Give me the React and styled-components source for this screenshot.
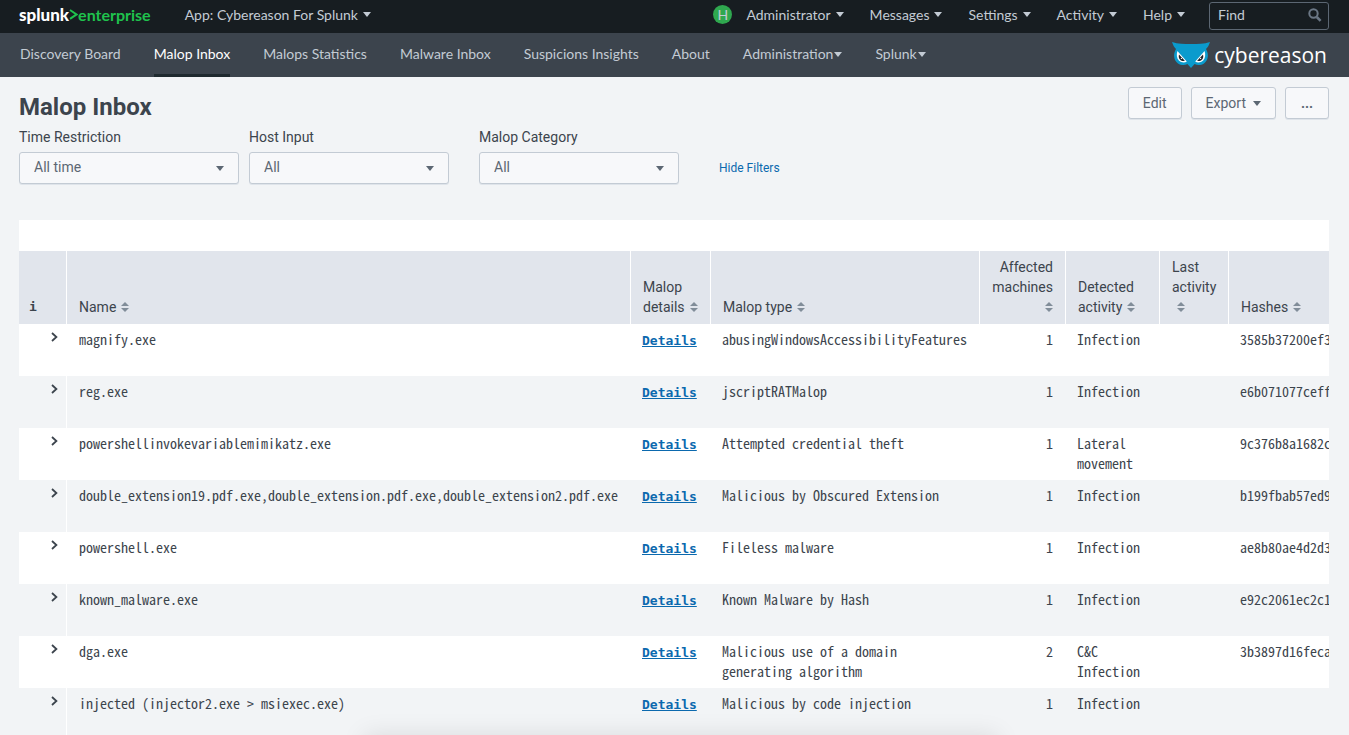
import React, { useState } from 'react';
import styled, { createGlobalStyle, css } from 'styled-components';

const appMenus = [
  { label: 'Discovery Board' },
  { label: 'Malop Inbox', active: true },
  { label: 'Malops Statistics' },
  { label: 'Malware Inbox' },
  { label: 'Suspicions Insights' },
  { label: 'About' },
  { label: 'Administration', dropdown: true },
  { label: 'Splunk', dropdown: true },
];

const systemMenus = ['Messages', 'Settings', 'Activity', 'Help'];

const filters = [
  { id: 'time', label: 'Time Restriction', value: 'All time', width: 220 },
  { id: 'host', label: 'Host Input', value: 'All', width: 200 },
  { id: 'category', label: 'Malop Category', value: 'All', width: 200 },
];

const columns = [
  { label: 'Name', width: 564 },
  { label: 'Malop details', width: 80 },
  { label: 'Malop type', width: 269 },
  { label: 'Affected machines', width: 86, right: true },
  { label: 'Detected activity', width: 94 },
  { label: 'Last activity', width: 69 },
  { label: 'Hashes' },
];

const malops = [
  {
    name: 'magnify.exe',
    type: 'abusingWindowsAccessibilityFeatures',
    machines: 1,
    activity: ['Infection'],
    hash: '3585b37200ef3',
  },
  {
    name: 'reg.exe',
    type: 'jscriptRATMalop',
    machines: 1,
    activity: ['Infection'],
    hash: 'e6b071077ceff',
  },
  {
    name: 'powershellinvokevariablemimikatz.exe',
    type: 'Attempted credential theft',
    machines: 1,
    activity: ['Lateral movement'],
    hash: '9c376b8a1682c',
  },
  {
    name: 'double_extension19.pdf.exe,double_extension.pdf.exe,double_extension2.pdf.exe',
    type: 'Malicious by Obscured Extension',
    machines: 1,
    activity: ['Infection'],
    hash: 'b199fbab57ed9',
  },
  {
    name: 'powershell.exe',
    type: 'Fileless malware',
    machines: 1,
    activity: ['Infection'],
    hash: 'ae8b80ae4d2d3',
  },
  {
    name: 'known_malware.exe',
    type: 'Known Malware by Hash',
    machines: 1,
    activity: ['Infection'],
    hash: 'e92c2061ec2c1',
  },
  {
    name: 'dga.exe',
    type: 'Malicious use of a domain generating algorithm',
    machines: 2,
    activity: ['C&C', 'Infection'],
    hash: '3b3897d16feca',
  },
  {
    name: 'injected (injector2.exe > msiexec.exe)',
    type: 'Malicious by code injection',
    machines: 1,
    activity: ['Infection'],
    hash: '',
  },
];

const OwlIcon = () => (
  <svg width="38" height="26" viewBox="0 0 38 26" aria-hidden="true">
    <path
      d="M0 0C6 2 12 2 19 2S32 2 38 0C37 3 36 5 34 7C37 12 36.5 18 32 21.5C29 23.5 25 23.5 22.6 22L19 26L15.4 22C13 23.5 9 23.5 6 21.5C1.5 18 1 12 4 7C2 5 1 3 0 0Z"
      fill="#0a9bcd"
    />
    <path d="M5.4 9L14.8 19.6C12.6 21.2 9 20.8 6.8 18.6C4.6 16.2 4.4 12.4 5.4 9Z" fill="#fff" />
    <path d="M32.6 9L23.2 19.6C25.4 21.2 29 20.8 31.2 18.6C33.4 16.2 33.6 12.4 32.6 9Z" fill="#fff" />
    <path d="M7 12.4L12.8 18.8C11 19.4 9.2 18.9 7.9 17.4C6.7 16 6.5 14.4 7 12.4Z" fill="#20262c" />
    <path d="M31 12.4L25.2 18.8C27 19.4 28.8 18.9 30.1 17.4C31.3 16 31.5 14.4 31 12.4Z" fill="#20262c" />
    <circle cx="9.4" cy="16.4" r="0.6" fill="#fff" />
    <circle cx="28.6" cy="16.4" r="0.6" fill="#fff" />
  </svg>
);

const SearchIcon = () => (
  <svg width="14" height="14" viewBox="0 0 14 14" aria-hidden="true">
    <circle cx="5.5" cy="5.5" r="4.2" fill="none" stroke="#6b7785" strokeWidth="2" />
    <path d="M8.8 9L12.6 12.8" stroke="#6b7785" strokeWidth="2.6" />
  </svg>
);

const SortIcon = () => (
  <svg width="8" height="10" viewBox="0 0 8 10" aria-hidden="true">
    <path d="M4 0L8 4H0ZM0 6H8L4 10Z" fill="#818d99" />
  </svg>
);

const App = () => {
  const [filtersShown, setFiltersShown] = useState(true);

  return (
    <>
      <GlobalStyle />
      <TopBar>
        <Brand href="#">
          <strong>splunk</strong>
          <svg width="9" height="12" viewBox="0 0 9 12" aria-hidden="true">
            <path d="M1 1L7.6 5.4L1 9.8" fill="none" stroke="#1fc24d" strokeWidth="2" />
          </svg>
          <span>enterprise</span>
        </Brand>
        <TopButton type="button">
          App: Cybereason For Splunk <Caret />
        </TopButton>
        <TopRight>
          <TopMenus>
            <TopButton type="button">
              <Avatar>H</Avatar>
              Administrator <Caret />
            </TopButton>
            {systemMenus.map((menu) => (
              <TopButton type="button" key={menu}>
                {menu} <Caret />
              </TopButton>
            ))}
          </TopMenus>
          <FindBox>
            <input type="text" placeholder="Find" aria-label="Find" />
            <SearchIcon />
          </FindBox>
        </TopRight>
      </TopBar>

      <AppBar>
        <AppNav>
          {appMenus.map((menu) => (
            <AppLink href="#" key={menu.label} $active={menu.active}>
              {menu.label}
              {menu.dropdown && <Caret />}
            </AppLink>
          ))}
        </AppNav>
        <AppLogo href="#">
          <OwlIcon />
          cybereason
        </AppLogo>
      </AppBar>

      <Main>
        <TitleRow>
          <Title>Malop Inbox</Title>
          <Actions>
            <ActionButton type="button">Edit</ActionButton>
            <ActionButton type="button">
              Export <Caret />
            </ActionButton>
            <ActionButton type="button">
              <b>...</b>
            </ActionButton>
          </Actions>
        </TitleRow>

        <FilterRow>
          {filtersShown &&
            filters.map((filter) => (
              <Field key={filter.id}>
                <label htmlFor={filter.id}>{filter.label}</label>
                <SelectBox $width={filter.width}>
                  <select id={filter.id} defaultValue={filter.value}>
                    <option>{filter.value}</option>
                  </select>
                  <Caret />
                </SelectBox>
              </Field>
            ))}
          <HideLink
            href="#"
            onClick={(e) => {
              e.preventDefault();
              setFiltersShown(!filtersShown);
            }}
          >
            {filtersShown ? 'Hide Filters' : 'Show Filters'}
          </HideLink>
        </FilterRow>

        <Panel>
          <Table>
            <colgroup>
              <Col $width={47} />
              {columns.map((column) => (
                <Col key={column.label} $width={column.width} />
              ))}
            </colgroup>
            <thead>
              <tr>
                <InfoHead>i</InfoHead>
                {columns.map((column) => (
                  <HeadCell key={column.label} $right={column.right}>
                    {column.label}
                    <Sort>
                      <SortIcon />
                    </Sort>
                  </HeadCell>
                ))}
              </tr>
            </thead>
            <tbody>
              {malops.map((malop) => (
                <Row key={malop.name}>
                  <ExpandCell>
                    <button type="button" aria-label="Expand">
                      <svg width="7" height="10" viewBox="0 0 7 10">
                        <path d="M1 1L5.4 5L1 9" fill="none" stroke="#3c444d" strokeWidth="1.8" />
                      </svg>
                    </button>
                  </ExpandCell>
                  <NameCell>{malop.name}</NameCell>
                  <Cell>
                    <DetailsLink href="#">Details</DetailsLink>
                  </Cell>
                  <Cell>{malop.type}</Cell>
                  <Cell $right>{malop.machines}</Cell>
                  <Cell>
                    {malop.activity.map((item) => (
                      <div key={item}>{item}</div>
                    ))}
                  </Cell>
                  <Cell />
                  <Cell>{malop.hash}</Cell>
                </Row>
              ))}
            </tbody>
          </Table>
        </Panel>
      </Main>
      <BottomShade />
    </>
  );
};

export default App;

const uiFont = `Roboto, 'Liberation Sans', sans-serif`;
const navFont = `Lato, Roboto, sans-serif`;
const monoFont = `'Noto Sans Mono CJK JP', 'Liberation Mono', monospace`;
const boldMonoFont = `'DejaVu Sans Mono', 'Liberation Mono', monospace`;

const GlobalStyle = createGlobalStyle`
  * {
    box-sizing: border-box;
  }
  body {
    margin: 0;
    background: #f2f4f6;
    color: #3c444d;
    font: 14px/20px ${uiFont};
    overflow-x: hidden;
  }
  a {
    text-decoration: none;
  }
  button,
  input,
  select {
    font: inherit;
    color: inherit;
  }
`;

const Caret = styled.i`
  display: inline-block;
  border: 4px solid transparent;
  border-top: 5px solid currentColor;
  border-bottom: 0;
`;

const TopBar = styled.header`
  display: flex;
  align-items: center;
  height: 33px;
  padding: 0 20px 1px 19px;
  background: #171d21;
  color: #c3cbd4;
  font: 14px/20px ${navFont};
`;

const Brand = styled.a`
  display: flex;
  align-items: center;
  margin-right: 34px;
  padding-bottom: 3px;
  font: bold 16px/20px ${navFont};
  color: #1fc24d;
  & > strong {
    color: #fff;
    font-size: 17px;
  }
`;

const TopButton = styled.button`
  display: flex;
  align-items: center;
  gap: 5px;
  padding: 0 0 3px;
  border: none;
  background: none;
  cursor: pointer;
  &:hover {
    color: #fff;
  }
`;

const TopRight = styled.div`
  margin-left: auto;
  display: flex;
  align-items: center;
  gap: 24px;
`;

const TopMenus = styled.div`
  display: flex;
  align-items: center;
  gap: 26px;
`;

const Avatar = styled.span`
  width: 19px;
  height: 19px;
  margin-right: 9px;
  border-radius: 50%;
  background: #2fa84f;
  text-align: center;
  line-height: 19px;
`;

const FindBox = styled.div`
  display: flex;
  align-items: center;
  width: 120px;
  height: 28px;
  padding: 0 6px 3px 8px;
  border: 1px solid #5c6773;
  border-radius: 3px;
  & > input {
    flex: 1;
    min-width: 0;
    padding: 0;
    border: none;
    outline: none;
    background: none;
  }
  & > input::placeholder {
    color: #c3cbd4;
    opacity: 1;
  }
`;

const AppBar = styled.nav`
  display: flex;
  align-items: center;
  justify-content: space-between;
  height: 44px;
  padding: 0 22px 0 20px;
  background: #3c444d;
  font: 14px/20px ${navFont};
`;

const AppNav = styled.div`
  display: flex;
  height: 100%;
  gap: 33px;
`;

const AppLink = styled.a`
  display: flex;
  align-items: center;
  gap: 1px;
  height: 100%;
  padding-top: 1px;
  color: #c3cbd4;
  border-bottom: 3px solid transparent;
  ${({ $active }) =>
    $active &&
    css`
      color: #fff;
      border-bottom-color: #1f2a2f;
    `}
`;

const AppLogo = styled.a`
  display: flex;
  align-items: center;
  gap: 4px;
  color: #fff;
  font: 21px/26px 'Open Sans', sans-serif;
`;

const Main = styled.main`
  padding: 10px 20px 0 19px;
`;

const TitleRow = styled.div`
  display: flex;
  justify-content: space-between;
  height: 40px;
`;

const Title = styled.h1`
  margin: 0;
  font: bold 24px/40px ${uiFont};
`;

const Actions = styled.div`
  display: flex;
  gap: 9px;
`;

const ActionButton = styled.button`
  display: flex;
  align-items: center;
  justify-content: center;
  gap: 7px;
  min-width: 44px;
  height: 32px;
  padding: 0 14px;
  border: 1px solid #c3cbd4;
  border-radius: 3px;
  background: #f7f8fa;
  box-shadow: 0 1px 0 #dfe4ea;
  color: #5c6773;
  cursor: pointer;
`;

const FilterRow = styled.div`
  display: flex;
  height: 93px;
`;

const Field = styled.div`
  width: 230px;
  & > label {
    display: block;
    margin-bottom: 5px;
  }
`;

const SelectBox = styled.div`
  display: flex;
  align-items: center;
  width: ${({ $width }) => $width}px;
  height: 32px;
  border: 1px solid #c3cbd4;
  border-radius: 3px;
  background: #f7f8fa;
  box-shadow: 0 1px 0 #dfe4ea;
  color: #5c6773;
  & > select {
    flex: 1;
    height: 30px;
    margin-right: -22px;
    padding: 0 14px 2px;
    border: none;
    background: none;
    appearance: none;
  }
  & > i {
    margin-right: 14px;
    pointer-events: none;
  }
`;

const HideLink = styled.a`
  margin: 31px 0 0 10px;
  color: #0b69ae;
  font-size: 12px;
`;

const Panel = styled.section`
  padding-top: 31px;
  background: #fff;
  overflow: hidden;
`;

const Table = styled.table`
  width: 100%;
  min-width: 1514px;
  table-layout: fixed;
  border-spacing: 0;
`;

const Col = styled.col`
  ${({ $width }) => $width && `width: ${$width}px;`}
`;

const HeadCell = styled.th`
  height: 73px;
  padding: 5px 12px 7px;
  border-left: 1px solid #fff;
  background: #e1e5ec;
  font-weight: normal;
  text-align: ${({ $right }) => ($right ? 'right' : 'left')};
  vertical-align: bottom;
`;

const InfoHead = styled(HeadCell)`
  padding-left: 10px;
  border-left: none;
  font: bold 13px/20px ${boldMonoFont};
`;

const Sort = styled.span`
  display: inline-block;
  margin-left: 5px;
`;

const Row = styled.tr`
  height: 52px;
  background: #fff;
  &:nth-child(even) {
    background: #f2f4f6;
  }
`;

const Cell = styled.td`
  padding: 5px 12px 7px;
  font: 14px/20px ${monoFont};
  vertical-align: top;
  text-align: ${({ $right }) => ($right ? 'right' : 'left')};
`;

const NameCell = styled(Cell)`
  border-left: 1px solid #fff;
  white-space: nowrap;
`;

const ExpandCell = styled.td`
  padding: 3px 8px;
  vertical-align: top;
  text-align: right;
  & > button {
    padding: 0;
    border: none;
    background: none;
    line-height: 20px;
    cursor: pointer;
  }
`;

const DetailsLink = styled.a`
  color: #0b69ae;
  font: bold 13px/20px ${boldMonoFont};
  text-decoration: underline;
`;

const BottomShade = styled.div`
  position: fixed;
  top: 100%;
  left: 27%;
  right: 26%;
  height: 40px;
  box-shadow: 0 0 24px rgba(0, 0, 0, 0.1);
`;
